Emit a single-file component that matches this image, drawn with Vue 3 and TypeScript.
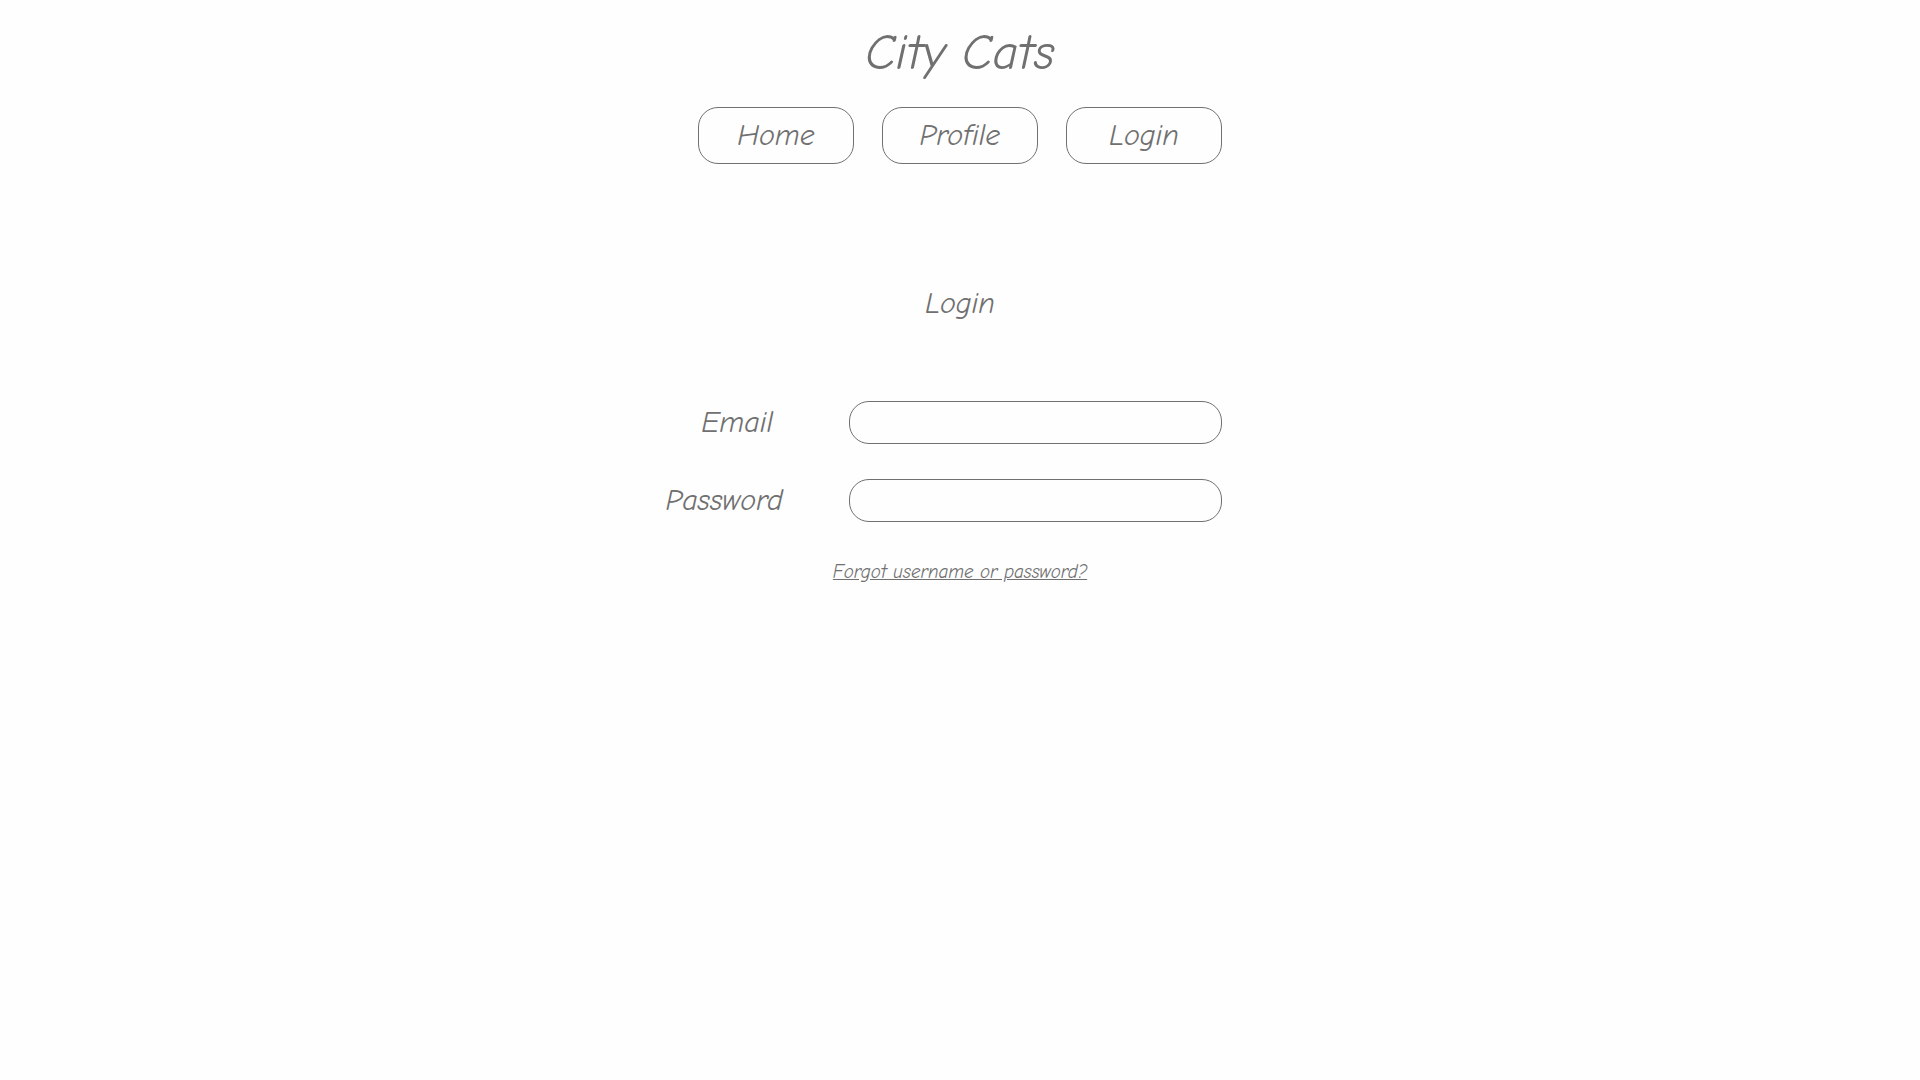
<script setup lang="ts">
import { ref } from 'vue'

const links: string[] = ['Home', 'Profile', 'Login']
const email = ref<string>('')
const password = ref<string>('')
</script>

<template>
  <div class="page">
    <header>
      <h1>City Cats</h1>
      <nav>
        <button v-for="link in links" :key="link" type="button">{{ link }}</button>
      </nav>
    </header>
    <main>
      <h2>Login</h2>
      <form @submit.prevent>
        <div class="field field-email">
          <label for="email">Email</label>
          <input id="email" v-model="email" type="email" />
        </div>
        <div class="field">
          <label for="password">Password</label>
          <input id="password" v-model="password" type="password" />
        </div>
        <a href="#">Forgot username or password?</a>
      </form>
    </main>
  </div>
</template>

<style>
body {
  background: #fefefe;
}
</style>

<style scoped>
.page {
  display: flex;
  flex-direction: column;
  align-items: center;
  padding-top: 20px;
  color: #707070;
  font-family: "Segoe Print", "Comic Neue", "Comic Sans MS", cursive;
  font-size: 30px;
  font-style: italic;
  line-height: 40px;
}

header,
main,
form {
  display: flex;
  flex-direction: column;
  align-items: center;
}

h1 {
  margin: 0 0 21px;
  font-size: 50px;
  font-weight: 400;
  line-height: 66px;
}

nav {
  display: flex;
  gap: 28px;
}

button {
  width: 156px;
  height: 57px;
  padding: 0;
  border: 1px solid #707070;
  border-radius: 20px;
  background: #fefefe;
  color: inherit;
  font: inherit;
}

h2 {
  margin: 120px 0 77px;
  font-size: 30px;
  font-weight: 400;
  line-height: 40px;
}

form {
  width: 524px;
  gap: 35px;
}

.field {
  display: flex;
  align-items: center;
  justify-content: flex-end;
  gap: 66px;
  width: 100%;
}

.field-email {
  gap: 76px;
}

input {
  flex: none;
  box-sizing: border-box;
  width: 373px;
  height: 43px;
  padding: 0 16px;
  border: 1px solid #707070;
  border-radius: 20px;
  background: #fefefe;
  color: inherit;
  font: inherit;
}

a {
  color: inherit;
  font-size: 19px;
  line-height: 30px;
}
</style>
